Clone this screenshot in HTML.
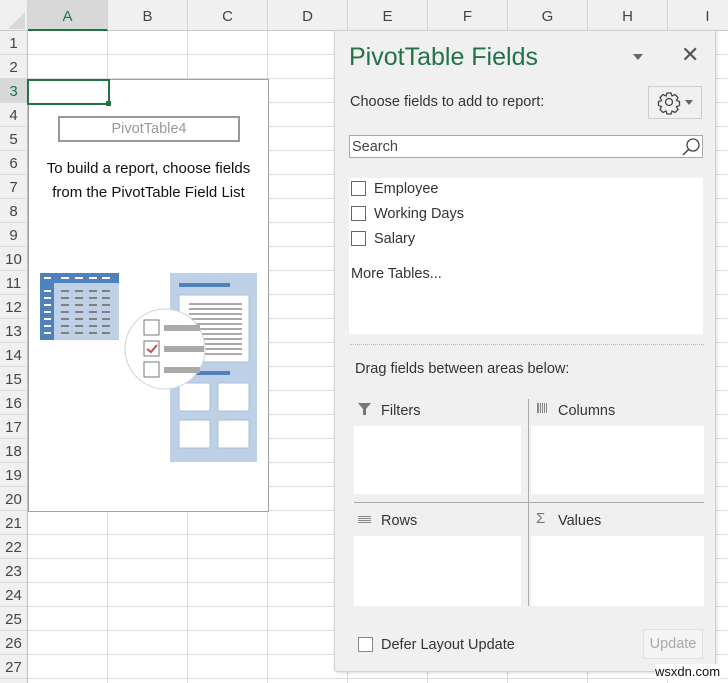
<!DOCTYPE html>
<html><head><style>
*{margin:0;padding:0;box-sizing:border-box}
body{width:728px;height:683px;overflow:hidden;background:#fff;font-family:"Liberation Sans",sans-serif;position:relative}
.abs{position:absolute}
#grid{left:28px;top:31px;width:700px;height:652px;
background-image:linear-gradient(to right,#dadada 1px,transparent 1px),linear-gradient(to bottom,#dadada 1px,transparent 1px);
background-size:80px 24px;background-position:-1px -1px}
#colh{left:0;top:0;width:728px;height:31px;background:#f0f0f0;border-bottom:1px solid #c8c8c8}
.ch{position:absolute;top:0;height:31px;width:80px;text-align:center;line-height:33px;font-size:15px;color:#444;border-right:1px solid #d4d4d4}
#rowh{left:0;top:31px;width:28px;height:652px;background:#f0f0f0;border-right:1px solid #c0c0c0}
.rh{position:absolute;left:0;width:27px;height:24px;text-align:center;line-height:25px;font-size:15px;color:#444;border-bottom:1px solid #dadada}
#panel{left:334px;top:30px;width:382px;height:642px;background:#f0f0f0;border:1px solid #d0d0d0;border-radius:0 0 4px 4px;box-shadow:1px 1px 3px rgba(0,0,0,.15)}
.t{position:absolute;color:#333;font-size:14.5px;white-space:nowrap}
.cb{position:absolute;width:15px;height:15px;border:1px solid #666;background:#fff}
.box{position:absolute;background:#fff}
</style></head><body>
<div id="grid" class="abs"></div>
<div id="colh" class="abs">
<div class="abs" style="left:0;top:0;width:28px;height:31px;border-right:1px solid #d4d4d4"></div>
<div class="abs" style="left:8px;top:12px;width:0;height:0;border-left:17px solid transparent;border-bottom:17px solid #d8d8d8"></div>
<div class="ch" style="left:28px;background:#d8d8d8;color:#217346;border-bottom:2px solid #217346">A</div>
<div class="ch" style="left:108px">B</div><div class="ch" style="left:188px">C</div><div class="ch" style="left:268px">D</div>
<div class="ch" style="left:348px">E</div><div class="ch" style="left:428px">F</div><div class="ch" style="left:508px">G</div>
<div class="ch" style="left:588px">H</div><div class="ch" style="left:668px">I</div>
</div>
<div id="rowh" class="abs">
<div class="rh" style="top:0">1</div><div class="rh" style="top:24px">2</div><div class="rh" style="top:48px;background:#d8d8d8;color:#217346">3</div>
<div class="rh" style="top:72px">4</div><div class="rh" style="top:96px">5</div><div class="rh" style="top:120px">6</div>
<div class="rh" style="top:144px">7</div><div class="rh" style="top:168px">8</div><div class="rh" style="top:192px">9</div>
<div class="rh" style="top:216px">10</div><div class="rh" style="top:240px">11</div><div class="rh" style="top:264px">12</div>
<div class="rh" style="top:288px">13</div><div class="rh" style="top:312px">14</div><div class="rh" style="top:336px">15</div>
<div class="rh" style="top:360px">16</div><div class="rh" style="top:384px">17</div><div class="rh" style="top:408px">18</div>
<div class="rh" style="top:432px">19</div><div class="rh" style="top:456px">20</div><div class="rh" style="top:480px">21</div>
<div class="rh" style="top:504px">22</div><div class="rh" style="top:528px">23</div><div class="rh" style="top:552px">24</div>
<div class="rh" style="top:576px">25</div><div class="rh" style="top:600px">26</div><div class="rh" style="top:624px">27</div>
</div>
<div class="abs" style="left:28px;top:79px;width:241px;height:433px;background:#fff;border:1px solid #a0a0a0"></div>
<div class="abs" style="left:27px;top:79px;width:83px;height:26px;border:2px solid #217346"></div>
<div class="abs" style="left:106px;top:101px;width:5px;height:5px;background:#217346"></div>
<div class="abs" style="left:58px;top:116px;width:182px;height:26px;border:2px solid #999;color:#999;font-size:14.5px;text-align:center;line-height:22px">PivotTable4</div>
<div class="abs" style="left:28px;top:157px;width:241px;text-align:center;font-size:15px;line-height:24px;color:#111">To build a report, choose fields<br>from the PivotTable Field List</div>
<svg class="abs" style="left:30px;top:260px" width="240" height="210">
<rect x="10" y="13" width="79" height="67" fill="#bdd0e6"/>
<rect x="10" y="13" width="79" height="10" fill="#4f81bd"/>
<rect x="10" y="13" width="14" height="67" fill="#4f81bd"/>
<g fill="#fff"><rect x="14" y="17" width="7" height="2"/><rect x="31" y="17" width="8" height="2"/><rect x="45" y="17" width="8" height="2"/><rect x="59" y="17" width="8" height="2"/><rect x="72" y="17" width="8" height="2"/>
<rect x="14" y="30" width="7" height="2"/><rect x="14" y="37" width="7" height="2"/><rect x="14" y="44" width="7" height="2"/><rect x="14" y="51" width="7" height="2"/><rect x="14" y="58" width="7" height="2"/><rect x="14" y="65" width="7" height="2"/><rect x="14" y="72" width="7" height="2"/></g>
<g fill="#7f7f7f">
<rect x="31" y="30" width="8" height="2"/><rect x="45" y="30" width="8" height="2"/><rect x="59" y="30" width="8" height="2"/><rect x="72" y="30" width="8" height="2"/>
<rect x="31" y="37" width="8" height="2"/><rect x="45" y="37" width="8" height="2"/><rect x="59" y="37" width="8" height="2"/><rect x="72" y="37" width="8" height="2"/>
<rect x="31" y="44" width="8" height="2"/><rect x="45" y="44" width="8" height="2"/><rect x="59" y="44" width="8" height="2"/><rect x="72" y="44" width="8" height="2"/>
<rect x="31" y="51" width="8" height="2"/><rect x="45" y="51" width="8" height="2"/><rect x="59" y="51" width="8" height="2"/><rect x="72" y="51" width="8" height="2"/>
<rect x="31" y="58" width="8" height="2"/><rect x="45" y="58" width="8" height="2"/><rect x="59" y="58" width="8" height="2"/><rect x="72" y="58" width="8" height="2"/>
<rect x="31" y="65" width="8" height="2"/><rect x="45" y="65" width="8" height="2"/><rect x="59" y="65" width="8" height="2"/><rect x="72" y="65" width="8" height="2"/>
<rect x="31" y="72" width="8" height="2"/><rect x="45" y="72" width="8" height="2"/><rect x="59" y="72" width="8" height="2"/><rect x="72" y="72" width="8" height="2"/>
</g>
<rect x="140" y="13" width="87" height="189" fill="#bdd0e6"/>
<rect x="149" y="23" width="51" height="4" fill="#4f81bd"/>
<rect x="149" y="35" width="70" height="67" fill="#fff" stroke="#a8bfd9"/>
<g fill="#aaa"><rect x="159" y="43" width="53" height="2"/><rect x="159" y="48" width="53" height="2"/><rect x="159" y="53" width="53" height="2"/><rect x="159" y="58" width="53" height="2"/><rect x="159" y="63" width="53" height="2"/><rect x="159" y="68" width="53" height="2"/><rect x="159" y="73" width="53" height="2"/><rect x="159" y="78" width="53" height="2"/><rect x="159" y="83" width="53" height="2"/><rect x="159" y="88" width="53" height="2"/><rect x="159" y="93" width="53" height="2"/></g>
<rect x="149" y="111" width="51" height="4" fill="#4f81bd"/>
<g fill="#fff" stroke="#a8bfd9"><rect x="149" y="123" width="31" height="28"/><rect x="188" y="123" width="31" height="28"/><rect x="149" y="160" width="31" height="28"/><rect x="188" y="160" width="31" height="28"/></g>
<circle cx="135" cy="89" r="40" fill="#fff" stroke="#c8d4e0"/>
<g fill="#fff" stroke="#777"><rect x="114" y="60" width="15" height="15"/><rect x="114" y="81" width="15" height="15"/><rect x="114" y="102" width="15" height="15"/></g>
<path d="M117 89 l4 3 l6 -7" fill="none" stroke="#c0504d" stroke-width="2"/>
<g fill="#aaa"><rect x="134" y="65" width="36" height="6"/><rect x="134" y="86" width="40" height="6"/><rect x="134" y="107" width="36" height="6"/></g>
</svg>
<div id="panel" class="abs">
<div class="t" style="left:14px;top:12px;font-size:25px;color:#217346">PivotTable Fields</div>
<div class="abs" style="left:298px;top:23px;border-left:5px solid transparent;border-right:5px solid transparent;border-top:6px solid #666"></div>
<div class="t" style="left:346px;top:11px;font-size:22px;color:#555">✕</div>
<div class="t" style="left:15px;top:63px">Choose fields to add to report:</div>
<div class="abs" style="left:313px;top:55px;width:54px;height:33px;border:1px solid #ccc;background:#f0f0f0">
<svg width="52" height="31"><g transform="translate(20,15)" fill="none" stroke="#444" stroke-width="1.3"><circle r="3.5"/><path d="M-2-9h4l1 3 3-1.5 3 3-1.5 3 3 1v4l-3 1 1.5 3-3 3-3-1.5-1 3h-4l-1-3-3 1.5-3-3 1.5-3-3-1v-4l3-1-1.5-3 3-3 3 1.5z"/></g><path d="M36 13h8l-4 5z" fill="#666"/></svg></div>
<div class="abs" style="left:14px;top:104px;width:354px;height:23px;border:1px solid #aaa;background:#fff"><span class="t" style="left:2px;top:3px;color:#444">Search</span>
<svg class="abs" style="left:330px;top:1px" width="22" height="20"><circle cx="13" cy="8" r="6" fill="none" stroke="#444" stroke-width="1.3"/><path d="M9 12 3 18" stroke="#444" stroke-width="1.5"/></svg></div>
<div class="box" style="left:14px;top:147px;width:354px;height:156px">
<div class="cb" style="left:2px;top:3px"></div><span class="t" style="left:25px;top:3px">Employee</span>
<div class="cb" style="left:2px;top:28px"></div><span class="t" style="left:25px;top:28px">Working Days</span>
<div class="cb" style="left:2px;top:53px"></div><span class="t" style="left:25px;top:53px">Salary</span>
<span class="t" style="left:2px;top:88px">More Tables...</span></div>
<div class="abs" style="left:15px;top:313px;width:354px;border-top:1px dotted #bbb"></div>
<div class="t" style="left:20px;top:330px">Drag fields between areas below:</div>
<svg class="abs" style="left:22px;top:370px" width="16" height="16"><path d="M1 2h13l-5 6v6h-3v-6z" fill="#777"/></svg>
<div class="t" style="left:46px;top:372px">Filters</div>
<svg class="abs" style="left:201px;top:371px" width="14" height="14"><g fill="#888"><rect x="1" y="1" width="2" height="10"/><rect x="4" y="1" width="1" height="10"/><rect x="6" y="1" width="1" height="10"/><rect x="8" y="1" width="1" height="10"/><rect x="10" y="1" width="1" height="10"/></g></svg>
<div class="t" style="left:223px;top:372px">Columns</div>
<div class="box" style="left:19px;top:395px;width:167px;height:68px"></div>
<div class="box" style="left:196px;top:395px;width:173px;height:68px"></div>
<div class="abs" style="left:193px;top:368px;width:1px;height:207px;background:#aaa"></div>
<div class="abs" style="left:19px;top:471px;width:350px;height:1px;background:#aaa"></div>
<svg class="abs" style="left:22px;top:482px" width="16" height="14"><g fill="#888"><rect x="1" y="3" width="13" height="1"/><rect x="1" y="5" width="13" height="1"/><rect x="1" y="7" width="13" height="1"/><rect x="1" y="9" width="13" height="1"/></g></svg>
<div class="t" style="left:46px;top:482px">Rows</div>
<div class="t" style="left:201px;top:479px;font-size:15px;color:#777">Σ</div>
<div class="t" style="left:223px;top:482px">Values</div>
<div class="box" style="left:19px;top:505px;width:167px;height:70px"></div>
<div class="box" style="left:196px;top:505px;width:173px;height:70px"></div>
<div class="cb" style="left:23px;top:606px;border-color:#888"></div>
<div class="t" style="left:46px;top:606px">Defer Layout Update</div>
<div class="abs" style="left:308px;top:598px;width:60px;height:30px;border:1px solid #e0e0e0;background:#f4f4f4;color:#aaa;font-size:14.5px;text-align:center;line-height:28px">Update</div>
</div>
<div class="abs" style="left:655px;top:664px;font-size:13px;color:#111;background:#fff">wsxdn.com</div>
</body></html>
